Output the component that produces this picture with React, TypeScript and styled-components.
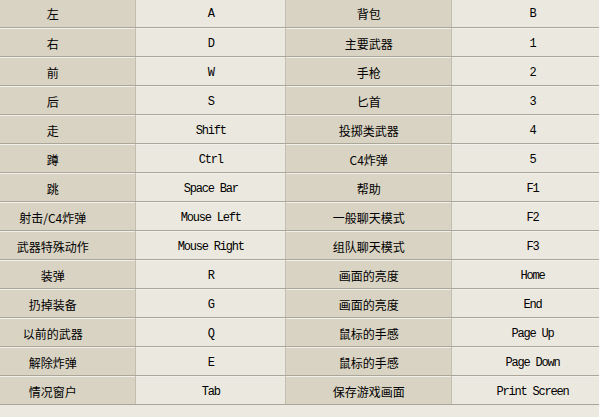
import styled, { createGlobalStyle } from 'styled-components';

const GlobalStyle = createGlobalStyle`
  html, body {
    margin: 0;
    padding: 0;
    background: #ece9e0;
    overflow: hidden;
  }
`;

const Page = styled.div`
  width: 599px;
  height: 417px;
  overflow: hidden;
  background: #ece9e0;
`;

const KeyTable = styled.table`
  margin: -2px 0 0 -30px;
  width: 644px;
  table-layout: fixed;
  border-collapse: collapse;
  border-spacing: 0;
`;

const Cell = styled.td<{ $label?: boolean; $w: number }>`
  box-sizing: border-box;
  width: ${(p) => p.$w}px;
  height: 29px;
  padding: 4px 0 0;
  text-align: center;
  vertical-align: middle;
  color: #000;
  background: ${(p) => (p.$label ? '#d9d3c3' : '#ebe8df')};
  border-right: 1px solid #c2beb2;
  border-bottom: 1px solid #aaa69a;
  box-shadow: inset 0 1px 0 #f2f0ea;
  font-family: ${(p) =>
    p.$label
      ? '"Noto Sans CJK SC", "Noto Sans", sans-serif'
      : '"Liberation Mono", "DejaVu Sans Mono", monospace'};
  font-size: 12px;
  letter-spacing: ${(p) => (p.$label ? '0' : '-1.2px')};
  line-height: 14px;
  white-space: nowrap;
`;

const rows: [string, string, string, string][] = [
  ['左', 'A', '背包', 'B'],
  ['右', 'D', '主要武器', '1'],
  ['前', 'W', '手枪', '2'],
  ['后', 'S', '匕首', '3'],
  ['走', 'Shift', '投掷类武器', '4'],
  ['蹲', 'Ctrl', 'C4炸弹', '5'],
  ['跳', 'Space Bar', '帮助', 'F1'],
  ['射击/C4炸弹', 'Mouse Left', '一般聊天模式', 'F2'],
  ['武器特殊动作', 'Mouse Right', '组队聊天模式', 'F3'],
  ['装弹', 'R', '画面的亮度', 'Home'],
  ['扔掉装备', 'G', '画面的亮度', 'End'],
  ['以前的武器', 'Q', '鼠标的手感', 'Page Up'],
  ['解除炸弹', 'E', '鼠标的手感', 'Page Down'],
  ['情况窗户', 'Tab', '保存游戏画面', 'Print Screen'],
];

export default function App() {
  return (
    <Page>
      <GlobalStyle />
      <KeyTable>
        <tbody>
          {rows.map(([a, b, c, d], i) => (
            <tr key={i}>
              <Cell $label $w={165}>{a}</Cell>
              <Cell $w={149}>{b}</Cell>
              <Cell $label $w={165}>{c}</Cell>
              <Cell $w={161}>{d}</Cell>
            </tr>
          ))}
        </tbody>
      </KeyTable>
    </Page>
  );
}
